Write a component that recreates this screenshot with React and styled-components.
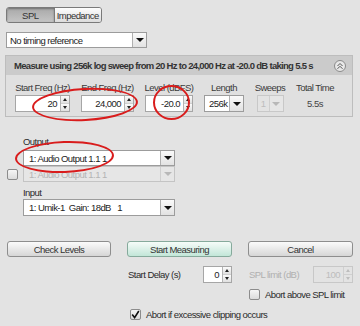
import styled, { createGlobalStyle } from 'styled-components';

const GlobalStyle = createGlobalStyle`
  html, body {
    margin: 0;
    padding: 0;
    background: #e3e3e3;
  }
  body {
    font-family: "Liberation Sans", Arial, sans-serif;
    font-size: 9.5px;
    letter-spacing: -0.55px;
    color: #2a2a2a;
  }
`;

const Page = styled.div`
  position: relative;
  width: 360px;
  height: 326px;
  overflow: hidden;
  padding-top: 7px;
  box-sizing: border-box;
`;

const Toggle = styled.div`
  display: flex;
  margin-left: 6px;
  width: 96px;
  height: 16px;
  border: 1px solid #7a7a7a;
  border-radius: 3px;
  box-sizing: border-box;
  overflow: hidden;
`;

const ToggleItem = styled.div`
  flex: 1;
  display: flex;
  align-items: center;
  justify-content: center;
  color: #333;
  background: ${(p) =>
    p.active
      ? 'linear-gradient(#a9a9a9, #c4c4c4)'
      : 'linear-gradient(#fdfdfd, #dcdcdc)'};
  box-shadow: ${(p) => (p.active ? 'inset 0 1px 2px rgba(0,0,0,0.35)' : 'none')};
  & + & {
    border-left: 1px solid #7a7a7a;
  }
`;

const Combo = styled.div`
  display: flex;
  width: ${(p) => p.w}px;
  height: ${(p) => p.h || 16}px;
  border: 1px solid ${(p) => (p.disabled ? '#c4c4c4' : '#9c9c9c')};
  background: ${(p) => (p.disabled ? '#e6e6e6' : '#fff')};
  box-sizing: border-box;
`;

const ComboText = styled.div`
  flex: 1;
  display: flex;
  align-items: center;
  padding-left: ${(p) => p.pad ?? 3}px;
  white-space: pre;
  overflow: hidden;
  color: ${(p) => (p.disabled ? '#b4b4b4' : '#222')};
`;

const ComboArrow = styled.div`
  width: 13px;
  display: flex;
  align-items: center;
  justify-content: center;
  border-left: 1px solid ${(p) => (p.disabled ? '#cfcfcf' : '#b0b0b0')};
  background: ${(p) =>
    p.disabled ? '#e6e6e6' : 'linear-gradient(#fafafa, #e2e2e2)'};
  &::after {
    content: '';
    border-left: 4px solid transparent;
    border-right: 4px solid transparent;
    border-top: 4px solid ${(p) => (p.disabled ? '#b8b8b8' : '#111')};
  }
`;

const TimingCombo = styled(Combo)`
  margin: 9px 0 0 6px;
`;

const Panel = styled.div`
  margin: 7px 0 0 5px;
  width: 348px;
  border: 1px solid #bdbdbd;
  box-sizing: border-box;
  background: #e0e0e0;
`;

const PanelHeader = styled.div`
  height: 19px;
  display: flex;
  align-items: center;
  justify-content: space-between;
  padding: 0 6px 0 8px;
  background: #cbcbcb;
  font-weight: bold;
  letter-spacing: -0.7px;
  white-space: nowrap;
  color: #333;
`;

const Collapse = styled.div`
  width: 12px;
  height: 12px;
  border: 1px solid #8a8a8a;
  border-radius: 50%;
  box-sizing: border-box;
  display: flex;
  align-items: center;
  justify-content: center;
  background: #e8e8e8;
`;

const PanelBody = styled.div`
  display: flex;
  padding: 7px 0 4px 9px;
  gap: 11px;
`;

const Field = styled.div`
  display: flex;
  flex-direction: column;
  align-items: center;
  width: ${(p) => p.w}px;
  gap: 1px;
`;

const FieldLabel = styled.div`
  height: 12px;
  line-height: 12px;
  white-space: nowrap;
  color: ${(p) => (p.disabled ? '#adadad' : '#3a3a3a')};
`;

const FieldValue = styled.div`
  height: 17px;
  display: flex;
  align-items: center;
  color: #444;
`;

const Spin = styled.div`
  display: flex;
  width: ${(p) => p.w}px;
  height: ${(p) => p.h || 17}px;
  border: 1px solid ${(p) => (p.disabled ? '#c8c8c8' : '#a6a6a6')};
  background: ${(p) => (p.disabled ? '#e3e3e3' : '#fff')};
  box-sizing: border-box;
`;

const SpinText = styled.div`
  flex: 1;
  display: flex;
  align-items: center;
  justify-content: flex-end;
  padding-right: 3px;
  color: ${(p) => (p.disabled ? '#bdbdbd' : '#222')};
`;

const SpinButtons = styled.div`
  width: 8px;
  display: flex;
  flex-direction: column;
  border-left: 1px solid ${(p) => (p.disabled ? '#d0d0d0' : '#b4b4b4')};
`;

const SpinHalf = styled.div`
  flex: 1;
  display: flex;
  align-items: center;
  justify-content: center;
  background: ${(p) => (p.disabled ? '#e3e3e3' : 'linear-gradient(#fbfbfb, #e0e0e0)')};
  & + & {
    border-top: 1px solid ${(p) => (p.disabled ? '#d0d0d0' : '#b4b4b4')};
  }
  &::after {
    content: '';
    border-left: 2px solid transparent;
    border-right: 2px solid transparent;
    ${(p) => (p.down ? 'border-top' : 'border-bottom')}: 3px solid
      ${(p) => (p.disabled ? '#bdbdbd' : '#222')};
  }
`;

const DevicesGrid = styled.div`
  display: grid;
  grid-template-columns: 11px 152px;
  column-gap: 5px;
  margin: 19px 0 0 7px;
  align-items: center;
`;

const DevLabel = styled.div`
  grid-column: 2;
  height: 11px;
  line-height: 11px;
  margin-bottom: ${(p) => p.mb || 0}px;
  margin-top: ${(p) => p.mt || 0}px;
  color: #2a2a2a;
`;

const Check = styled.div`
  width: 11px;
  height: 11px;
  border: 1px solid #8c8c8c;
  border-radius: 2px;
  box-sizing: border-box;
  background: linear-gradient(#f6f6f6, #dcdcdc);
  display: flex;
  align-items: center;
  justify-content: center;
  flex-shrink: 0;
`;

const ActionGrid = styled.div`
  display: grid;
  grid-template-columns: 104px 105px 105px;
  column-gap: 16px;
  margin: 25px 0 0 7px;
`;

const Button = styled.div`
  height: 16px;
  border: 1px solid ${(p) => (p.primary ? '#86aa9c' : '#8e8e8e')};
  border-radius: 3px;
  box-sizing: border-box;
  display: flex;
  align-items: center;
  justify-content: center;
  color: #333;
  background: ${(p) =>
    p.primary
      ? 'linear-gradient(#f6fcf9, #c2e6d8)'
      : 'linear-gradient(#fbfbfb, #d6d6d6)'};
`;

const Row = styled.div`
  grid-column: ${(p) => p.col || 'auto'};
  display: flex;
  align-items: center;
  justify-content: ${(p) => p.justify || 'flex-start'};
  gap: 5px;
  margin-top: ${(p) => p.mt || 0}px;
  padding-left: ${(p) => p.pl || 0}px;
  height: ${(p) => p.h || 17}px;
  white-space: nowrap;
  color: ${(p) => (p.disabled ? '#b0b0b0' : '#2a2a2a')};
`;

const Ellipse = styled.div`
  position: absolute;
  left: ${(p) => p.x}px;
  top: ${(p) => p.y}px;
  width: ${(p) => p.w}px;
  height: ${(p) => p.h}px;
  border: 2px solid #d91c1c;
  border-radius: 50%;
  box-sizing: border-box;
  transform: rotate(${(p) => p.r || 0}deg);
  pointer-events: none;
`;

const SpinBox = ({ w, value, disabled, h }) => (
  <Spin w={w} h={h} disabled={disabled}>
    <SpinText disabled={disabled}>{value}</SpinText>
    <SpinButtons disabled={disabled}>
      <SpinHalf disabled={disabled} />
      <SpinHalf disabled={disabled} down />
    </SpinButtons>
  </Spin>
);

const ComboBox = ({ w, h, text, disabled, pad }) => (
  <Combo w={w} h={h} disabled={disabled}>
    <ComboText disabled={disabled} pad={pad}>
      {text}
    </ComboText>
    <ComboArrow disabled={disabled} />
  </Combo>
);

const Tick = () => (
  <svg width="9" height="9" viewBox="0 0 9 9">
    <path d="M1.2 4.6 L3.6 7.6 L7.8 1" fill="none" stroke="#111" strokeWidth="1.6" />
  </svg>
);

export default function App() {
  return (
    <Page>
      <GlobalStyle />
      <Toggle>
        <ToggleItem active>SPL</ToggleItem>
        <ToggleItem>Impedance</ToggleItem>
      </Toggle>

      <TimingCombo w={141}>
        <ComboText>No timing reference</ComboText>
        <ComboArrow />
      </TimingCombo>

      <Panel>
        <PanelHeader>
          <span>Measure using 256k log sweep from 20 Hz to 24,000 Hz at -20.0 dB taking 5.5 s</span>
          <Collapse>
            <svg width="8" height="8" viewBox="0 0 8 8">
              <path d="M1.5 4 L4 1.5 L6.5 4 M1.5 6.8 L4 4.3 L6.5 6.8" fill="none" stroke="#555" strokeWidth="1" />
            </svg>
          </Collapse>
        </PanelHeader>
        <PanelBody>
          <Field w={55}>
            <FieldLabel>Start Freq (Hz)</FieldLabel>
            <SpinBox w={55} value="20" />
          </Field>
          <Field w={53}>
            <FieldLabel>End Freq (Hz)</FieldLabel>
            <SpinBox w={53} value="24,000" />
          </Field>
          <Field w={48}>
            <FieldLabel>Level (dBFS)</FieldLabel>
            <SpinBox w={48} value="-20.0" />
          </Field>
          <Field w={40}>
            <FieldLabel>Length</FieldLabel>
            <ComboBox w={40} h={17} text="256k" pad={4} />
          </Field>
          <Field w={30}>
            <FieldLabel>Sweeps</FieldLabel>
            <Spin w={27} disabled>
              <SpinText disabled>1</SpinText>
              <ComboArrow disabled />
            </Spin>
          </Field>
          <Field w={38}>
            <FieldLabel>Total Time</FieldLabel>
            <FieldValue>5.5s</FieldValue>
          </Field>
        </PanelBody>
      </Panel>

      <DevicesGrid>
        <DevLabel mb={3}>Output</DevLabel>
        <span />
        <ComboBox w={152} text="1: Audio Output 1.1 1" pad={5} />
        <Check />
        <ComboBox w={152} text="1: Audio Output 1.1 1" pad={5} disabled />
        <DevLabel mt={5} mb={1}>Input</DevLabel>
        <span />
        <ComboBox w={152} h={17} text="1: Umik-1  Gain: 18dB   1" pad={5} />
      </DevicesGrid>

      <ActionGrid>
        <Button>Check Levels</Button>
        <Button primary>Start Measuring</Button>
        <Button>Cancel</Button>

        <Row col="2" mt={9} justify="space-between" pl={1}>
          <span>Start Delay (s)</span>
          <SpinBox w={29} value="0" />
        </Row>
        <Row col="3" mt={9} justify="space-between" pl={1} disabled>
          <span>SPL limit (dB)</span>
          <SpinBox w={40} value="100" disabled />
        </Row>

        <Row col="3" mt={3} h={17} pl={1}>
          <Check />
          <span>Abort above SPL limit</span>
        </Row>
        <Row col="2 / 4" mt={3} h={17} pl={3}>
          <Check>
            <Tick />
          </Check>
          <span>Abort if excessive clipping occurs</span>
        </Row>
      </ActionGrid>

      <Ellipse x={32} y={88} w={106} h={33} r={-3} />
      <Ellipse x={153} y={85} w={37} h={35} />
      <Ellipse x={15} y={141} w={99} h={32} r={-2} />
    </Page>
  );
}
